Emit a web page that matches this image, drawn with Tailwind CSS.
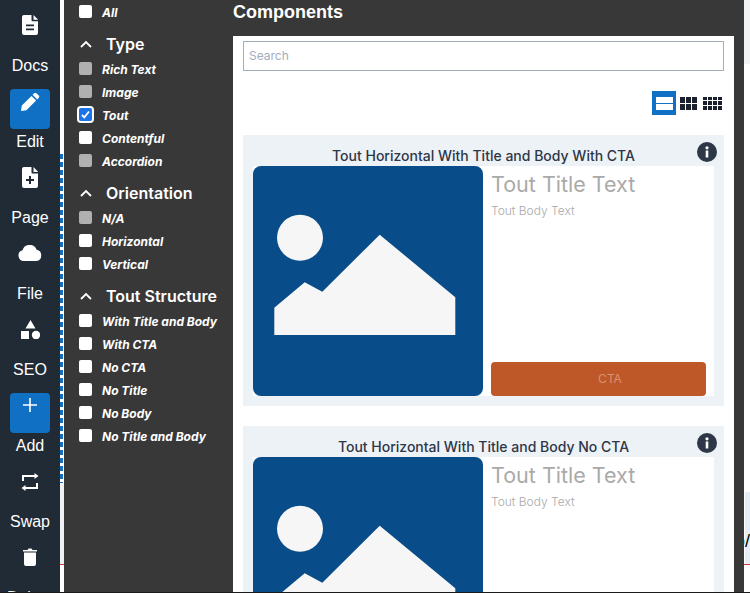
<!DOCTYPE html>
<html lang="en">
<head>
    <meta charset="UTF-8">
    <meta name="viewport" content="width=device-width, initial-scale=1.0">
    <title>Components</title>
    <script src="https://cdn.jsdelivr.net/npm/@tailwindcss/browser@4"></script>
</head>
<body class="bg-[#1a1a1a] font-['Inter',sans-serif]">
    <div class="flex h-[592px] w-[750px] overflow-hidden">
        <!-- Icon sidebar -->
        <nav class="w-[60px] shrink-0 bg-[#212b36] text-white flex flex-col items-center pt-[13px] text-[16px] leading-[24px] font-['Liberation_Sans',sans-serif]">
            <div class="h-[76px] shrink-0 flex flex-col items-center">
                <div class="w-10 h-10 flex justify-center pt-[2px]">
                    <svg class="w-4 h-5" viewBox="0 0 16 21" preserveAspectRatio="none" fill="#fff"><path d="M2 0h7.500v5.500a1 1 0 0 0 1 1H16V19a2 2 0 0 1-2 2H2a2 2 0 0 1-2-2V2a2 2 0 0 1 2-2zm9.500 0L16 4.700v.3h-4.500zM4 10v1.800h8V10zm0 4.200V16h8v-1.800z" fill-rule="evenodd"/></svg>
                </div>
                <div class="pt-px">Docs</div>
            </div>
            <div class="h-[76px] shrink-0 flex flex-col items-center">
                <div class="w-10 h-10 rounded-[4px] bg-[#1071c4] flex justify-center pt-[3px]">
                    <svg class="w-[19px] h-[19px]" viewBox="0 0 19 19" fill="#fff"><path d="M13.200 1.200a1.600 1.600 0 0 1 2.200 0l2.400 2.400a1.600 1.600 0 0 1 0 2.200l-1.600 1.600-4.600-4.600zM10.500 3.900l4.600 4.600L5.400 18.200 0 19l.8-5.400z"/></svg>
                </div>
                <div class="pt-px">Edit</div>
            </div>
            <div class="h-[76px] shrink-0 flex flex-col items-center">
                <div class="w-10 h-10 flex justify-center pt-[2px]">
                    <svg class="w-4 h-[21px]" viewBox="0 0 16 21" fill="#fff"><path d="M2 0h7.500v5.500a1 1 0 0 0 1 1H16V19a2 2 0 0 1-2 2H2a2 2 0 0 1-2-2V2a2 2 0 0 1 2-2zm9.500 0L16 4.700v.3h-4.500zM7 9v3H4v2h3v3h2v-3h3v-2H9V9z" fill-rule="evenodd"/></svg>
                </div>
                <div class="pt-px">Page</div>
            </div>
            <div class="h-[76px] shrink-0 flex flex-col items-center">
                <div class="w-10 h-10 flex justify-center pt-[4px]">
                    <svg class="w-6 h-4" viewBox="0 0 24 16" fill="#fff"><path d="M6 16a5.500 5.500 0 0 1-1.500-10.800A7.500 7.500 0 0 1 18.700 4.800 5.700 5.700 0 0 1 18.500 16z"/></svg>
                </div>
                <div class="pt-px">File</div>
            </div>
            <div class="h-[76px] shrink-0 flex flex-col items-center">
                <div class="w-10 h-10 flex justify-center pt-[3px]">
                    <svg class="w-[19px] h-[19px]" viewBox="0 0 19 19" fill="#fff"><path d="M9.500 0l5 8.500h-10z"/><rect x="0" y="11" width="8" height="8"/><circle cx="15" cy="15" r="4.200"/></svg>
                </div>
                <div class="pt-px">SEO</div>
            </div>
            <div class="h-[76px] shrink-0 flex flex-col items-center">
                <div class="w-10 h-10 rounded-[4px] bg-[#1071c4] flex justify-center pt-[5px]">
                    <svg class="w-[14px] h-[14px]" viewBox="0 0 14 14" fill="#fff"><path d="M6.200 0h1.600v6.200H14v1.600H7.800V14H6.200V7.800H0V6.200h6.200z"/></svg>
                </div>
                <div class="pt-px">Add</div>
            </div>
            <div class="h-[76px] shrink-0 flex flex-col items-center">
                <div class="w-10 h-10 flex justify-center pt-[3px]">
                    <svg class="w-[18px] h-[20px]" viewBox="0 0 18 20" fill="none" stroke="#fff" stroke-width="2"><path d="M2 9V4h14"/><path d="M16 11v5H2"/><path d="M13.500 1v6l4-3z" fill="#fff" stroke="none"/><path d="M4.500 13v6l-4-3z" fill="#fff" stroke="none"/></svg>
                </div>
                <div class="pt-px">Swap</div>
            </div>
            <div class="h-[76px] shrink-0 flex flex-col items-center">
                <div class="w-10 h-10 flex justify-center pt-[3px]">
                    <svg class="w-[14px] h-[18px]" viewBox="0 0 14 18" fill="#fff"><path d="M0 2h4.500L5.500.5h3L9.500 2H14v1.500H0zM1 4.500h12V16a2 2 0 0 1-2 2H3a2 2 0 0 1-2-2z"/></svg>
                </div>
                <div class="pt-px">Delete</div>
            </div>
        </nav>

        <!-- Sliver of the page behind -->
        <div class="w-1 shrink-0 bg-white flex flex-col">
            <div class="h-[154px] shrink-0"></div>
            <div class="h-[329px] shrink-0 w-[3px] bg-[repeating-linear-gradient(to_bottom,#1071c4_0,#1071c4_5px,#fff_5px,#fff_8px)]"></div>
            <div class="h-[81px] shrink-0 bg-[#f0f1f3]"></div>
            <div class="h-px shrink-0 bg-[#d9363e]"></div>
        </div>

        <!-- Filter column -->
        <aside class="w-[169px] shrink-0 bg-[#383838] text-white pl-[15px]">
            <label class="h-[23px] mt-[1px] flex items-center gap-[10px] text-[12px] font-bold italic"><span class="-mt-[3px] w-[13px] h-[13px] rounded-[2px] bg-white"></span>All</label>

            <h3 class="mt-2 h-6 flex items-center gap-[14px] pl-[1px] text-[16px] font-semibold"><svg class="w-3 h-2" viewBox="0 0 12 8" fill="none" stroke="#fff" stroke-width="1.800"><path d="M1 7l5-5 5 5"/></svg>Type</h3>
            <label class="h-[23px] mt-[2px] flex items-center gap-[10px] text-[12px] font-bold italic"><span class="-mt-[3px] w-[13px] h-[13px] rounded-[2px] bg-[#b0b0b0]"></span>Rich Text</label>
            <label class="h-[23px] flex items-center gap-[10px] text-[12px] font-bold italic"><span class="-mt-[3px] w-[13px] h-[13px] rounded-[2px] bg-[#b0b0b0]"></span>Image</label>
            <label class="h-[23px] flex items-center gap-[10px] text-[12px] font-bold italic"><span class="-mt-[3px] w-[13px] h-[13px] rounded-[2px] bg-[#1a73e8] outline-[2px] outline-white flex items-center justify-center"><svg class="w-[9px] h-[9px]" viewBox="0 0 9 9" fill="none" stroke="#fff" stroke-width="1.800"><path d="M1 5l2.300 2.300L8 1.500"/></svg></span>Tout</label>
            <label class="h-[23px] flex items-center gap-[10px] text-[12px] font-bold italic"><span class="-mt-[3px] w-[13px] h-[13px] rounded-[2px] bg-white"></span>Contentful</label>
            <label class="h-[23px] flex items-center gap-[10px] text-[12px] font-bold italic"><span class="-mt-[3px] w-[13px] h-[13px] rounded-[2px] bg-[#b0b0b0]"></span>Accordion</label>

            <h3 class="mt-2 h-6 flex items-center gap-[14px] pl-[1px] text-[16px] font-semibold"><svg class="w-3 h-2" viewBox="0 0 12 8" fill="none" stroke="#fff" stroke-width="1.800"><path d="M1 7l5-5 5 5"/></svg>Orientation</h3>
            <label class="h-[23px] mt-[2px] flex items-center gap-[10px] text-[12px] font-bold italic"><span class="-mt-[3px] w-[13px] h-[13px] rounded-[2px] bg-[#b0b0b0]"></span>N/A</label>
            <label class="h-[23px] flex items-center gap-[10px] text-[12px] font-bold italic"><span class="-mt-[3px] w-[13px] h-[13px] rounded-[2px] bg-white"></span>Horizontal</label>
            <label class="h-[23px] flex items-center gap-[10px] text-[12px] font-bold italic"><span class="-mt-[3px] w-[13px] h-[13px] rounded-[2px] bg-white"></span>Vertical</label>

            <h3 class="mt-2 h-6 flex items-center gap-[14px] pl-[1px] text-[16px] font-semibold"><svg class="w-3 h-2" viewBox="0 0 12 8" fill="none" stroke="#fff" stroke-width="1.800"><path d="M1 7l5-5 5 5"/></svg>Tout Structure</h3>
            <label class="h-[23px] mt-[2px] flex items-center gap-[10px] text-[12px] font-bold italic"><span class="-mt-[3px] w-[13px] h-[13px] rounded-[2px] bg-white"></span>With Title and Body</label>
            <label class="h-[23px] flex items-center gap-[10px] text-[12px] font-bold italic"><span class="-mt-[3px] w-[13px] h-[13px] rounded-[2px] bg-white"></span>With CTA</label>
            <label class="h-[23px] flex items-center gap-[10px] text-[12px] font-bold italic"><span class="-mt-[3px] w-[13px] h-[13px] rounded-[2px] bg-white"></span>No CTA</label>
            <label class="h-[23px] flex items-center gap-[10px] text-[12px] font-bold italic"><span class="-mt-[3px] w-[13px] h-[13px] rounded-[2px] bg-white"></span>No Title</label>
            <label class="h-[23px] flex items-center gap-[10px] text-[12px] font-bold italic"><span class="-mt-[3px] w-[13px] h-[13px] rounded-[2px] bg-white"></span>No Body</label>
            <label class="h-[23px] flex items-center gap-[10px] text-[12px] font-bold italic"><span class="-mt-[3px] w-[13px] h-[13px] rounded-[2px] bg-white"></span>No Title and Body</label>
        </aside>

        <!-- Components column -->
        <main class="w-[511px] shrink-0 bg-[#383838] pr-[10px] flex flex-col">
            <h2 class="h-9 shrink-0 pb-[11px] flex items-center text-white text-[18px] font-bold font-['Liberation_Sans',sans-serif]">Components</h2>
            <div class="flex-1 min-h-0 overflow-hidden bg-white px-[10px] pt-[5px]">
                <input class="w-full h-[30px] border border-[#a0aec0] px-[5px] pb-[2px] text-[12px] placeholder:text-[#a0aec0]" placeholder="Search">
                <div class="h-[64px] flex items-center justify-end pr-[2px]">
                    <div class="w-6 h-6 bg-[#1071c4] flex flex-col justify-center items-center gap-[1px]">
                        <span class="w-[17px] h-[6px] bg-white"></span>
                        <span class="w-[17px] h-[6px] bg-white"></span>
                    </div>
                    <div class="ml-1 w-[17px] h-[13px] grid grid-cols-3 grid-rows-2 gap-[1px]">
                        <span class="bg-[#1a202c]"></span><span class="bg-[#1a202c]"></span><span class="bg-[#1a202c]"></span>
                        <span class="bg-[#1a202c]"></span><span class="bg-[#1a202c]"></span><span class="bg-[#1a202c]"></span>
                    </div>
                    <div class="ml-[6px] w-[19px] h-[13px] grid grid-cols-4 grid-rows-3 gap-[1px]">
                        <span class="bg-[#1a202c]"></span><span class="bg-[#1a202c]"></span><span class="bg-[#1a202c]"></span><span class="bg-[#1a202c]"></span>
                        <span class="bg-[#1a202c]"></span><span class="bg-[#1a202c]"></span><span class="bg-[#1a202c]"></span><span class="bg-[#1a202c]"></span>
                        <span class="bg-[#1a202c]"></span><span class="bg-[#1a202c]"></span><span class="bg-[#1a202c]"></span><span class="bg-[#1a202c]"></span>
                    </div>
                </div>

                <section class="relative h-[271px] bg-[#edf2f7] px-[10px] mb-5">
                    <svg class="absolute right-[7px] top-[7px] w-5 h-5" viewBox="0 0 20 20"><circle cx="10" cy="10" r="10" fill="#2d3748"/><rect x="8.700" y="8.500" width="2.600" height="7" fill="#fff"/><circle cx="10" cy="5.800" r="1.600" fill="#fff"/></svg>
                    <h4 class="h-[31px] pt-[13px] text-center text-[14px] leading-[16px] font-medium text-[#2d3748]">Tout Horizontal With Title and Body With CTA</h4>
                    <div class="flex bg-white h-[230px]">
                        <svg class="w-[230px] h-[230px] shrink-0" viewBox="0 0 230 230"><rect width="230" height="230" rx="8" fill="#084c89"/><circle cx="47" cy="71.700" r="23" fill="#f6f6f6"/><path d="M21.300 141.700L51.700 116.300 69.300 125.700 126.700 68.700 202.300 131.300V169H21.300z" fill="#f6f6f6"/></svg>
                        <div class="flex-1 flex flex-col px-2">
                            <div class="text-[21.500px] leading-[36px] text-[#aaaaaa]">Tout Title Text</div>
                            <div class="text-[12px] leading-[18px] text-[#aaaaaa] font-light">Tout Body Text</div>
                            <div class="mt-auto h-[34px] rounded-[4px] bg-[#bf5828] text-[#d9916f] text-[12px] pl-[23px] flex items-center justify-center">CTA</div>
                        </div>
                    </div>
                </section>

                <section class="relative h-[271px] bg-[#edf2f7] px-[10px]">
                    <svg class="absolute right-[7px] top-[7px] w-5 h-5" viewBox="0 0 20 20"><circle cx="10" cy="10" r="10" fill="#2d3748"/><rect x="8.700" y="8.500" width="2.600" height="7" fill="#fff"/><circle cx="10" cy="5.800" r="1.600" fill="#fff"/></svg>
                    <h4 class="h-[31px] pt-[13px] text-center text-[14px] leading-[16px] font-medium text-[#2d3748]">Tout Horizontal With Title and Body No CTA</h4>
                    <div class="flex bg-white h-[230px]">
                        <svg class="w-[230px] h-[230px] shrink-0" viewBox="0 0 230 230"><rect width="230" height="230" rx="8" fill="#084c89"/><circle cx="47" cy="71.700" r="23" fill="#f6f6f6"/><path d="M21.300 141.700L51.700 116.300 69.300 125.700 126.700 68.700 202.300 131.300V169H21.300z" fill="#f6f6f6"/></svg>
                        <div class="flex-1 flex flex-col px-2">
                            <div class="text-[21.500px] leading-[36px] text-[#aaaaaa]">Tout Title Text</div>
                            <div class="text-[12px] leading-[18px] text-[#aaaaaa] font-light">Tout Body Text</div>
                        </div>
                    </div>
                </section>
            </div>
        </main>

        <!-- Sliver of the page behind, right side -->
        <div class="flex-1 min-w-0 flex flex-col overflow-hidden bg-white">
            <div class="h-16 shrink-0 bg-[#f1f3f5]"></div>
            <div class="h-[428px] shrink-0"></div>
            <div class="h-[72px] shrink-0 ml-px bg-[#e8eef5] flex justify-end pt-[37px] text-[18px] leading-[24px] whitespace-nowrap font-['Liberation_Sans',sans-serif] text-black"><span class="text-[#1071c4]">o</span>/</div>
            <div class="h-px shrink-0 bg-[#d9363e]"></div>
        </div>
    </div>
</body>
</html>
